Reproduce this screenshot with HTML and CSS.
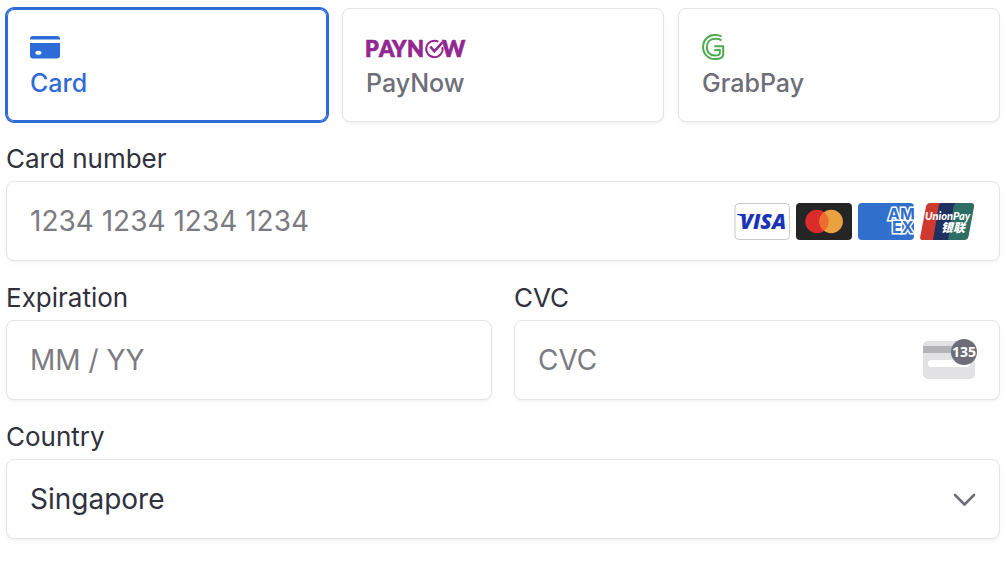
FILE: index.html
```html
<!DOCTYPE html>
<html lang="en">
<head>
<meta charset="utf-8">
<meta name="viewport" content="width=device-width, initial-scale=1">
<title>Payment details</title>
<link rel="stylesheet" href="styles.css">
</head>
<body>
<form class="payment">
  <div class="methods">
    <button type="button" class="method method-selected" aria-pressed="true">
      <svg class="method-icon" width="30" height="26" viewBox="0 0 30 26" aria-hidden="true">
        <path fill="#2d6bd8" d="M0 5.4V4.6Q0 2 3 2H27Q30 2 30 4.6V5.4ZM0 9H30V21.5Q30 24.5 27 24.5H3Q0 24.5 0 21.5Z"/>
        <ellipse cx="8.4" cy="18.7" rx="3" ry="2" fill="#fff"/>
      </svg>
      <span>Card</span>
    </button>
    <button type="button" class="method" aria-pressed="false">
      <svg class="method-icon" width="102" height="26" viewBox="0 0 102 26" aria-hidden="true">
        <text class="paynow-text" x="-1 13 26 41" y="23">PAYN</text>
        <text class="paynow-text" x="76" y="23">W</text>
        <path d="M76.400 13A8.200 8.200 0 1 1 72.500 7.800" fill="none" stroke="#92278f" stroke-width="1.900"/>
        <path d="M64.300 12.500L68.300 17.300L76.500 8.300" fill="none" stroke="#92278f" stroke-width="2.600"/>
      </svg>
      <span>PayNow</span>
    </button>
    <button type="button" class="method" aria-pressed="false">
      <svg class="method-icon" width="24" height="26" viewBox="0 0 24 26" aria-hidden="true">
        <g fill="none" stroke="#4bab4e" stroke-width="2">
          <path d="M19.5 2.4C17 .9 14.5 .8 12.6 .9C5.8 1.200 1.100 6 1.100 13S5.900 25 12.600 25.100C17 25.100 21.200 24 21.200 20.500V12.200H12.300"/>
          <path d="M19.500 6.300C17.500 5 15 4.600 12.900 4.800C8 5 4.800 8.300 4.800 13.200S8.300 21.500 12.900 21.600C16 21.600 17.800 21.200 17.800 19V15.900H12.300"/>
        </g>
      </svg>
      <span>GrabPay</span>
    </button>
  </div>

  <div class="field">
    <label class="label" for="number">Card number</label>
    <div class="control">
      <input class="entry" id="number" type="text" inputmode="numeric" placeholder="1234 1234 1234 1234">
      <div class="brands">
        <svg width="56" height="37" viewBox="0 0 56 37" role="img" aria-label="Visa">
          <rect x="1" y=".5" width="54.500" height="36" rx="4" fill="#fff" stroke="#c9c9ce"/>
          <text class="visa-text" x="6" y="26">VISA</text>
          <path d="M3 11H10L12 16Q8 12.500 3 11.800Z" fill="#1a34b8"/>
        </svg>
        <svg width="56" height="37" viewBox="0 0 56 37" role="img" aria-label="Mastercard">
          <rect width="56" height="37" rx="4" fill="#252525"/>
          <circle cx="21" cy="18.500" r="11.700" fill="#dc2b2b"/>
          <circle cx="35.200" cy="18.500" r="11.700" fill="#eaa140"/>
          <path d="M28.100 9.200A11.700 11.700 0 0 1 28.100 27.800A11.700 11.700 0 0 1 28.100 9.200Z" fill="#ed6c30"/>
        </svg>
        <svg width="56" height="37" viewBox="0 0 56 37" role="img" aria-label="American Express">
          <rect width="56" height="37" rx="4" fill="#306fcc"/>
          <text class="amex-text" x="30" y="17">AM</text>
          <text class="amex-text" x="34" y="30">EX</text>
        </svg>
        <svg width="56" height="37" viewBox="0 0 56 37" role="img" aria-label="UnionPay">
          <path d="M10 0H24L17 37H3Q-.5 37 .3 33.500L6 3.500Q6.800 0 10 0Z" fill="#ce3a30"/>
          <path d="M22 0H38L31 37H13L18.500 4Q19 0 22 0Z" fill="#20305f"/>
          <path d="M37 0H51Q54.800 0 54 4L48.500 33.500Q47.800 37 44 37H28L33.500 4Q34 0 37 0Z" fill="#2c6d65"/>
          <text class="union-text" x="5" y="17">UnionPay</text>
          <text class="union-cjk" x="21" y="29">银联</text>
        </svg>
      </div>
    </div>
  </div>

  <div class="row">
    <div class="field">
      <label class="label" for="expiry">Expiration</label>
      <div class="control">
        <input class="entry" id="expiry" type="text" inputmode="numeric" placeholder="MM / YY">
      </div>
    </div>
    <div class="field">
      <label class="label" for="cvc">CVC</label>
      <div class="control">
        <input class="entry" id="cvc" type="text" inputmode="numeric" placeholder="CVC">
        <svg class="cvc-icon" width="54" height="44" viewBox="0 0 54 44" aria-hidden="true">
          <rect y="3" width="52" height="38" rx="5" fill="#e2e2e5"/>
          <rect y="8" width="52" height="7" fill="#b3b3b8"/>
          <rect x="5" y="22" width="42" height="7" rx="3" fill="#fff"/>
          <circle cx="41" cy="14" r="13" fill="#6c6d77"/>
          <text class="cvc-text" x="41" y="19" text-anchor="middle">135</text>
        </svg>
      </div>
    </div>
  </div>

  <div class="field">
    <label class="label" for="country">Country</label>
    <div class="control">
      <select class="entry" id="country">
        <option>Singapore</option>
      </select>
      <svg class="chevron" width="24" height="24" viewBox="0 0 24 24" aria-hidden="true">
        <path d="M3 8L12.500 17.500L22 8" fill="none" stroke="#6d6e78" stroke-width="2.600" stroke-linecap="round" stroke-linejoin="round"/>
      </svg>
    </div>
  </div>
</form>
</body>
</html>
```
FILE: styles.css
```css
* {
  box-sizing: border-box;
}

body {
  margin: 0;
  background: #fff;
  color: #30313d;
  font-family: Inter, "Liberation Sans", sans-serif;
}

.payment {
  display: flex;
  flex-direction: column;
  gap: 22px;
  padding: 8px 6px 22px;
}

.methods {
  display: grid;
  grid-template-columns: repeat(3, minmax(0, 1fr));
  gap: 14px;
}

.method,
.control {
  border: 1px solid #e4e4e6;
  border-radius: 8px;
  background: #fff;
  box-shadow: 0 2px 2px rgba(0, 0, 0, 0.03), 0 4px 10px rgba(0, 0, 0, 0.02);
}

.method {
  display: flex;
  flex-direction: column;
  align-items: flex-start;
  gap: 7px;
  padding: 25px 23px 22px;
  color: #6d6e78;
  font-family: inherit;
  font-size: 25px;
  font-weight: 500;
  line-height: 32px;
  cursor: pointer;
}

.method-selected {
  border-color: #2d6bd8;
  color: #2d6bd8;
  box-shadow: inset 0 0 0 1px #2d6bd8, 0 0 0 1px #2d6bd8;
}

.method-icon {
  display: block;
  overflow: visible;
}

.row {
  display: grid;
  grid-template-columns: repeat(2, minmax(0, 1fr));
  gap: 22px;
}

.field {
  display: flex;
  flex-direction: column;
  gap: 7px;
}

.label {
  font-size: 26px;
  line-height: 30px;
}

.control {
  position: relative;
  display: flex;
  align-items: center;
  height: 80px;
}

.entry {
  flex: 1;
  width: 0;
  min-width: 0;
  height: 100%;
  padding: 0 23px;
  border: 0;
  border-radius: 8px;
  outline: 0;
  background: transparent;
  color: #30313d;
  font-family: inherit;
  font-size: 28px;
  appearance: none;
}

.entry::placeholder {
  color: #7b7b81;
  opacity: 1;
}

.brands {
  display: flex;
  flex: none;
  gap: 6px;
  padding-right: 23px;
}

.cvc-icon {
  flex: none;
  margin-right: 22px;
}

.chevron {
  position: absolute;
  right: 23px;
  pointer-events: none;
}

.paynow-text {
  fill: #92278f;
  stroke: #92278f;
  stroke-width: 0.7px;
  font: 900 22px Lato, sans-serif;
}

.visa-text {
  fill: #1a34b8;
  font: italic 800 21px "Open Sans", sans-serif;
}

.amex-text {
  fill: #306fcc;
  stroke: #fff;
  stroke-width: 3px;
  paint-order: stroke;
  font: 700 16px Inter, sans-serif;
}

.union-text {
  fill: #fff;
  font: italic 900 11px Lato, sans-serif;
}

.union-cjk {
  fill: #fff;
  font: italic 900 12px "Noto Sans CJK SC", sans-serif;
}

.cvc-text {
  fill: #fff;
  font: 700 14px "Noto Sans", sans-serif;
}
```
